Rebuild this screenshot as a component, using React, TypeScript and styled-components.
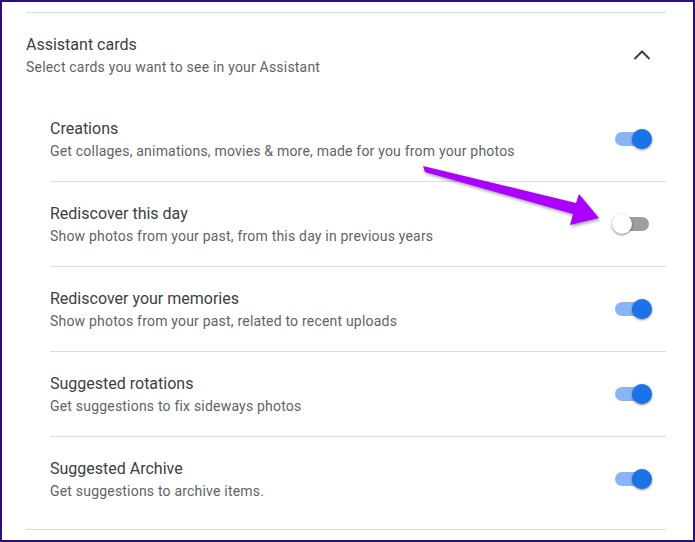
import React from "react";
import styled, { createGlobalStyle } from "styled-components";

const GlobalStyle = createGlobalStyle`
  html, body { margin: 0; padding: 0; background: #ffffff; }
  body { font-family: Roboto, "Noto Sans", Arial, sans-serif; -webkit-font-smoothing: antialiased; }
  * { box-sizing: border-box; }
`;

const Frame = styled.div`
  position: relative;
  width: 695px;
  height: 542px;
  border: 2px solid #2c0f78;
  background: #ffffff;
  padding: 10px 27px 0 24px;
  overflow: hidden;
`;

const Section = styled.section`
  border-top: 1px solid #dadce0;
  border-bottom: 1px solid #dadce0;
`;

const Header = styled.div`
  display: flex;
  align-items: center;
  padding: 19.5px 15px 20.5px 0;
`;

const TextBlock = styled.div`
  flex: 1;
  min-width: 0;
  display: flex;
  flex-direction: column;
`;

const Title = styled.div`
  font-size: 16px;
  line-height: 24px;
  color: #3c4043;
`;

const Subtitle = styled.div`
  font-size: 14px;
  line-height: 20px;
  letter-spacing: 0.2px;
  color: #5f6368;
`;

const List = styled.div`
  padding: 0 0 8px 24px;
`;

const Row = styled.div`
  display: flex;
  align-items: center;
  padding: 20px 14px 20px 0;
  border-bottom: 1px solid #dadce0;
  &:last-child { border-bottom: none; }
`;

const SwitchBox = styled.div`
  position: relative;
  width: 40px;
  height: 20px;
  flex: none;
`;

const Track = styled.div<{ $on: boolean }>`
  position: absolute;
  left: 3px;
  right: 3px;
  top: 3px;
  height: 14px;
  border-radius: 7px;
  background: ${(p) => (p.$on ? "#8ab4f8" : "#9e9e9e")};
`;

const Thumb = styled.div<{ $on: boolean }>`
  position: absolute;
  top: 0;
  left: ${(p) => (p.$on ? "20px" : "0")};
  width: 20px;
  height: 20px;
  border-radius: 50%;
  background: ${(p) => (p.$on ? "#1a73e8" : "#ffffff")};
  box-shadow: 0 1px 3px rgba(0, 0, 0, 0.4), 0 1px 1px rgba(0, 0, 0, 0.14);
`;

const Chevron = styled.svg`
  display: block;
  flex: none;
`;

const ArrowLayer = styled.svg`
  position: absolute;
  left: -2px;
  top: -2px;
  width: 695px;
  height: 542px;
  pointer-events: none;
  filter: drop-shadow(1px 2px 1.5px rgba(0, 0, 0, 0.35));
`;

const Switch = ({ on }: { on: boolean }) => (
  <SwitchBox>
    <Track $on={on} />
    <Thumb $on={on} />
  </SwitchBox>
);

const items = [
  { t: "Creations", s: "Get collages, animations, movies & more, made for you from your photos", on: true },
  { t: "Rediscover this day", s: "Show photos from your past, from this day in previous years", on: false },
  { t: "Rediscover your memories", s: "Show photos from your past, related to recent uploads", on: true },
  { t: "Suggested rotations", s: "Get suggestions to fix sideways photos", on: true },
  { t: "Suggested Archive", s: "Get suggestions to archive items.", on: true },
];

export default function App() {
  return (
    <>
      <GlobalStyle />
      <Frame>
        <Section>
          <Header>
            <TextBlock>
              <Title>Assistant cards</Title>
              <Subtitle>Select cards you want to see in your Assistant</Subtitle>
            </TextBlock>
            <Chevron width="18" height="12" viewBox="0 0 18 12">
              <polyline points="1.5,10 9,2.5 16.5,10" fill="none" stroke="#3c4043" strokeWidth="2" />
            </Chevron>
          </Header>
          <List>
            {items.map((it) => (
              <Row key={it.t}>
                <TextBlock>
                  <Title>{it.t}</Title>
                  <Subtitle>{it.s}</Subtitle>
                </TextBlock>
                <Switch on={it.on} />
              </Row>
            ))}
          </List>
        </Section>
        <ArrowLayer viewBox="0 0 695 542">
          <polygon
            points="423,166 576,203 579,194 599,218 570,225 573,214 425,172"
            fill="#aa00ff"
          />
        </ArrowLayer>
      </Frame>
    </>
  );
}
